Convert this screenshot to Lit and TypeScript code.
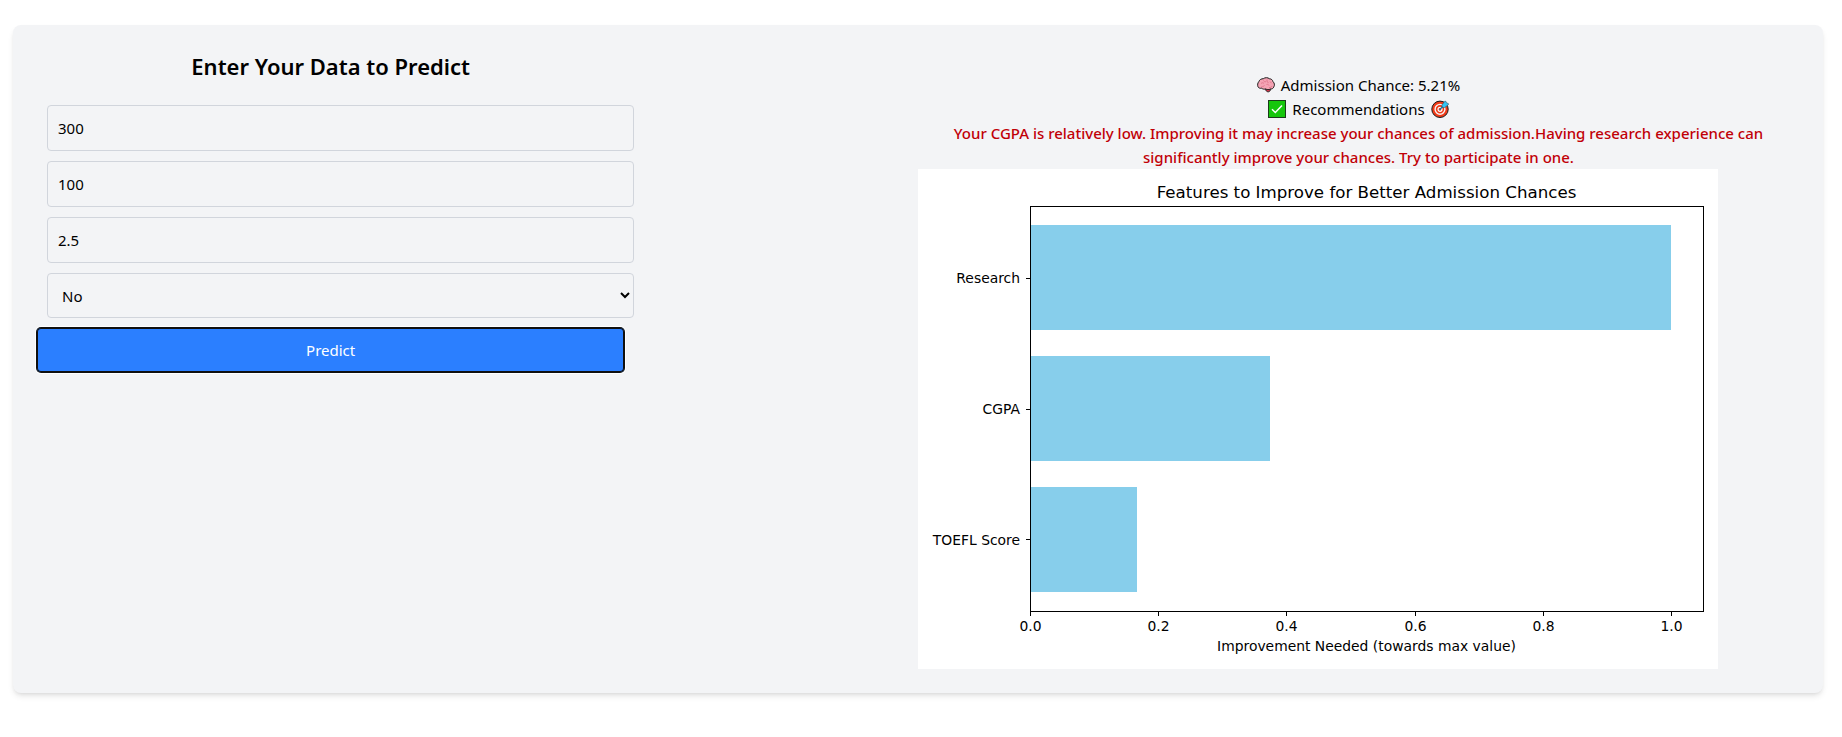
import { LitElement, html, svg, css } from "lit";
import { customElement, property, state } from "lit/decorators.js";

interface Feature {
  name: string;
  value: number;
}

/* The figure is 8in x 5in: 800 x 500 dots, with type and lines set in points. */
const pt = (dots: number): number => dots * 0.72;

const AXES = { left: 112, top: 37, width: 673, height: 405, max: 1.05 };
const TICKS = [0, 0.2, 0.4, 0.6, 0.8, 1];

@customElement("improvement-chart")
export class ImprovementChart extends LitElement {
  @property({ attribute: false }) features: Feature[] = [];

  static styles = css`
    :host {
      display: block;
      max-width: 800px;
    }
    .figure {
      display: block;
      width: 100%;
      background: #fff;
      font-family: "DejaVu Sans", sans-serif;
    }
    .title {
      font-size: 12px;
      text-anchor: middle;
    }
    .label {
      font-size: 10px;
      text-anchor: middle;
    }
    .name {
      font-size: 10px;
      text-anchor: end;
    }
    .bar {
      fill: #87ceeb;
      shape-rendering: crispEdges;
    }
    .line {
      fill: none;
      stroke: #000;
      stroke-width: 1px;
      vector-effect: non-scaling-stroke;
      shape-rendering: crispEdges;
    }
  `;

  private x(value: number): number {
    return AXES.left + (AXES.width * value) / AXES.max;
  }

  render() {
    const bottom = AXES.top + AXES.height;
    const centre = AXES.left + AXES.width / 2;
    return html`
      <svg class="figure" viewBox="0 0 576 360" role="img" aria-label="Features to improve">
        <text class="title" x=${pt(centre)} y=${pt(29)}>
          Features to Improve for Better Admission Chances
        </text>
        ${this.features.map((feature, i) => {
          const top = 56 + i * 131;
          const middle = top + 53;
          return svg`
            <rect class="bar" x=${pt(AXES.left)} y=${pt(top)}
              width=${pt(this.x(feature.value) - AXES.left)} height=${pt(105)}></rect>
            <path class="line" d="M${pt(AXES.left - 4.5)} ${pt(middle)}H${pt(AXES.left + 0.5)}"></path>
            <text class="name" x=${pt(102)} y=${pt(middle + 5)}>${feature.name}</text>`;
        })}
        ${TICKS.map((tick) => {
          const x = Math.round(this.x(tick)) + 0.5;
          return svg`
            <path class="line" d="M${pt(x)} ${pt(bottom)}V${pt(bottom + 5)}"></path>
            <text class="label" x=${pt(x)} y=${pt(bottom + 20)}>${tick.toFixed(1)}</text>`;
        })}
        <rect
          class="line"
          x=${pt(AXES.left + 0.5)}
          y=${pt(AXES.top + 0.5)}
          width=${pt(AXES.width)}
          height=${pt(AXES.height)}
        ></rect>
        <text class="label" x=${pt(centre)} y=${pt(bottom + 40)}>
          Improvement Needed (towards max value)
        </text>
      </svg>
    `;
  }
}

const brain = html`<svg class="icon" viewBox="0 0 18 18" aria-hidden="true">
  <path d="M9 14.5c1 1.8 3.8 1.8 4.3-.4l-.4-2.2-4.5.5z" fill="#e8384f" stroke="#1b1b1b" />
  <path
    d="M1 10.8C.3 9 .6 7 1.8 5.700 2.500 3.500 4.600 2.700 6.300 2.700 8 1.300 11 1.400 12.300 2.700c2 .1 3.400 1.300 3.700 3 1.600 1.300 1.800 3.600.9 5-.5 1.700-2 2.500-3.600 2.300-1.400.9-3.300 1-4.500-.1-1.500.5-3.200.300-4-.7C3.200 12.600 1.500 12 1 10.800z"
    fill="#f4a3b4"
    stroke="#1b1b1b"
  />
  <path
    d="M4 7.500c1.200-1 2.200-.8 3 0M6.500 4.500c.3 1 1.300 1.500 2.500 1.200M10 3.500v2.200l1.600 1M9.500 8.500c1.200-.5 2 0 2.500 1M13 5.500l1.500 1.700M4.500 10.500c1.500.4 2.300-.2 3-1.200M12 11.500c1.500.2 2.500-.3 3-1.500"
    fill="none"
    stroke="#dc6f86"
    stroke-width=".8"
  />
</svg>`;

const check = html`<svg class="icon" viewBox="0 0 18 18" aria-hidden="true">
  <rect x=".5" y=".5" width="17" height="17" fill="#16c60c" stroke="#1b3b1b" />
  <path d="M4 9.300l3.300 3.200L14 5.500" fill="none" stroke="#fff" stroke-width="1.500" />
</svg>`;

const target = html`<svg class="icon" viewBox="0 0 18 18" aria-hidden="true">
  <circle cx="9" cy="9.300" r="8.200" fill="#f03a17" stroke="#1b1b1b" />
  <circle cx="9" cy="9.300" r="4.900" fill="#f03a17" stroke="#f4f4f4" stroke-width="1.400" />
  <circle cx="9" cy="9.300" r="2" fill="#f03a17" stroke="#fff" stroke-width="1.200" />
  <path d="M8.500 9.800l4-4" stroke="#1a6f99" stroke-width="1.300" />
  <path d="M10.800 5.200l3-4 1.200.2.500 1.500 1.800.6.200 1-3.700 3-2.300.1z" fill="#31c4f3" stroke="#24566b" stroke-width=".6" />
</svg>`;

@customElement("app-root")
export class AppRoot extends LitElement {
  @state() private features: Feature[] = [
    { name: "Research", value: 1 },
    { name: "CGPA", value: 0.375 },
    { name: "TOEFL Score", value: 1 / 6 },
  ];

  static styles = css`
    :host {
      display: block;
      padding: 25px 19px 44px 13px;
      background: #fff;
      color: #000;
      font-family: "Segoe UI", "Noto Sans", sans-serif;
      font-size: 15px;
      line-height: 24px;
    }
    .card {
      display: flex;
      justify-content: space-between;
      align-items: flex-start;
      padding: 24px;
      border-radius: 8px;
      background: #f3f4f6;
      box-shadow:
        0 4px 6px -1px rgb(0 0 0 / 0.1),
        0 2px 4px -2px rgb(0 0 0 / 0.1);
    }
    .form {
      display: flex;
      flex-direction: column;
      gap: 10px;
      width: calc(100% / 3);
    }
    .heading {
      margin: 0;
      padding: 1px 0 13px;
      font-size: 22px;
      line-height: 32px;
      font-weight: 600;
      text-align: center;
    }
    .field {
      box-sizing: border-box;
      width: 100%;
      margin: 0 0 0 10px;
      padding: 10px;
      border: 1px solid #d1d5dc;
      border-radius: 4px;
      background: transparent;
      color: inherit;
      font: inherit;
    }
    .text {
      height: 46px;
    }
    .choice {
      height: 45px;
      padding-right: 0;
    }
    .submit {
      padding: 10px;
      border: 0;
      border-radius: 4px;
      background: #2b7fff;
      color: #fff;
      font: inherit;
      box-shadow:
        inset 0 0 0 1px #101010,
        0 0 0 1px #101010,
        0 0 0 2px #fff;
    }
    .result {
      width: 50%;
      padding-top: 24px;
    }
    .line {
      display: flex;
      justify-content: center;
      align-items: center;
      gap: 6px;
      margin: 0;
    }
    .icon {
      width: 18px;
      height: 18px;
    }
    .advice {
      margin: 0;
      color: #c10007;
      font-weight: 550;
      text-align: center;
    }
  `;

  render() {
    return html`
      <main class="card">
        <form class="form" @submit=${(e: Event) => e.preventDefault()}>
          <h2 class="heading">Enter Your Data to Predict</h2>
          <input class="field text" type="text" inputmode="decimal" aria-label="GRE Score" .value=${"300"} />
          <input class="field text" type="text" inputmode="decimal" aria-label="TOEFL Score" .value=${"100"} />
          <input class="field text" type="text" inputmode="decimal" aria-label="CGPA" .value=${"2.5"} />
          <select class="field choice" aria-label="Research">
            <option selected>No</option>
            <option>Yes</option>
          </select>
          <button class="submit" type="submit">Predict</button>
        </form>
        <section class="result">
          <p class="line">${brain}<span>Admission Chance: 5.21%</span></p>
          <p class="line">${check}<span>Recommendations</span>${target}</p>
          <p class="advice">
            Your CGPA is relatively low. Improving it may increase your chances of
            admission.Having research experience can significantly improve your chances. Try to
            participate in one.
          </p>
          <improvement-chart .features=${this.features}></improvement-chart>
        </section>
      </main>
    `;
  }
}
